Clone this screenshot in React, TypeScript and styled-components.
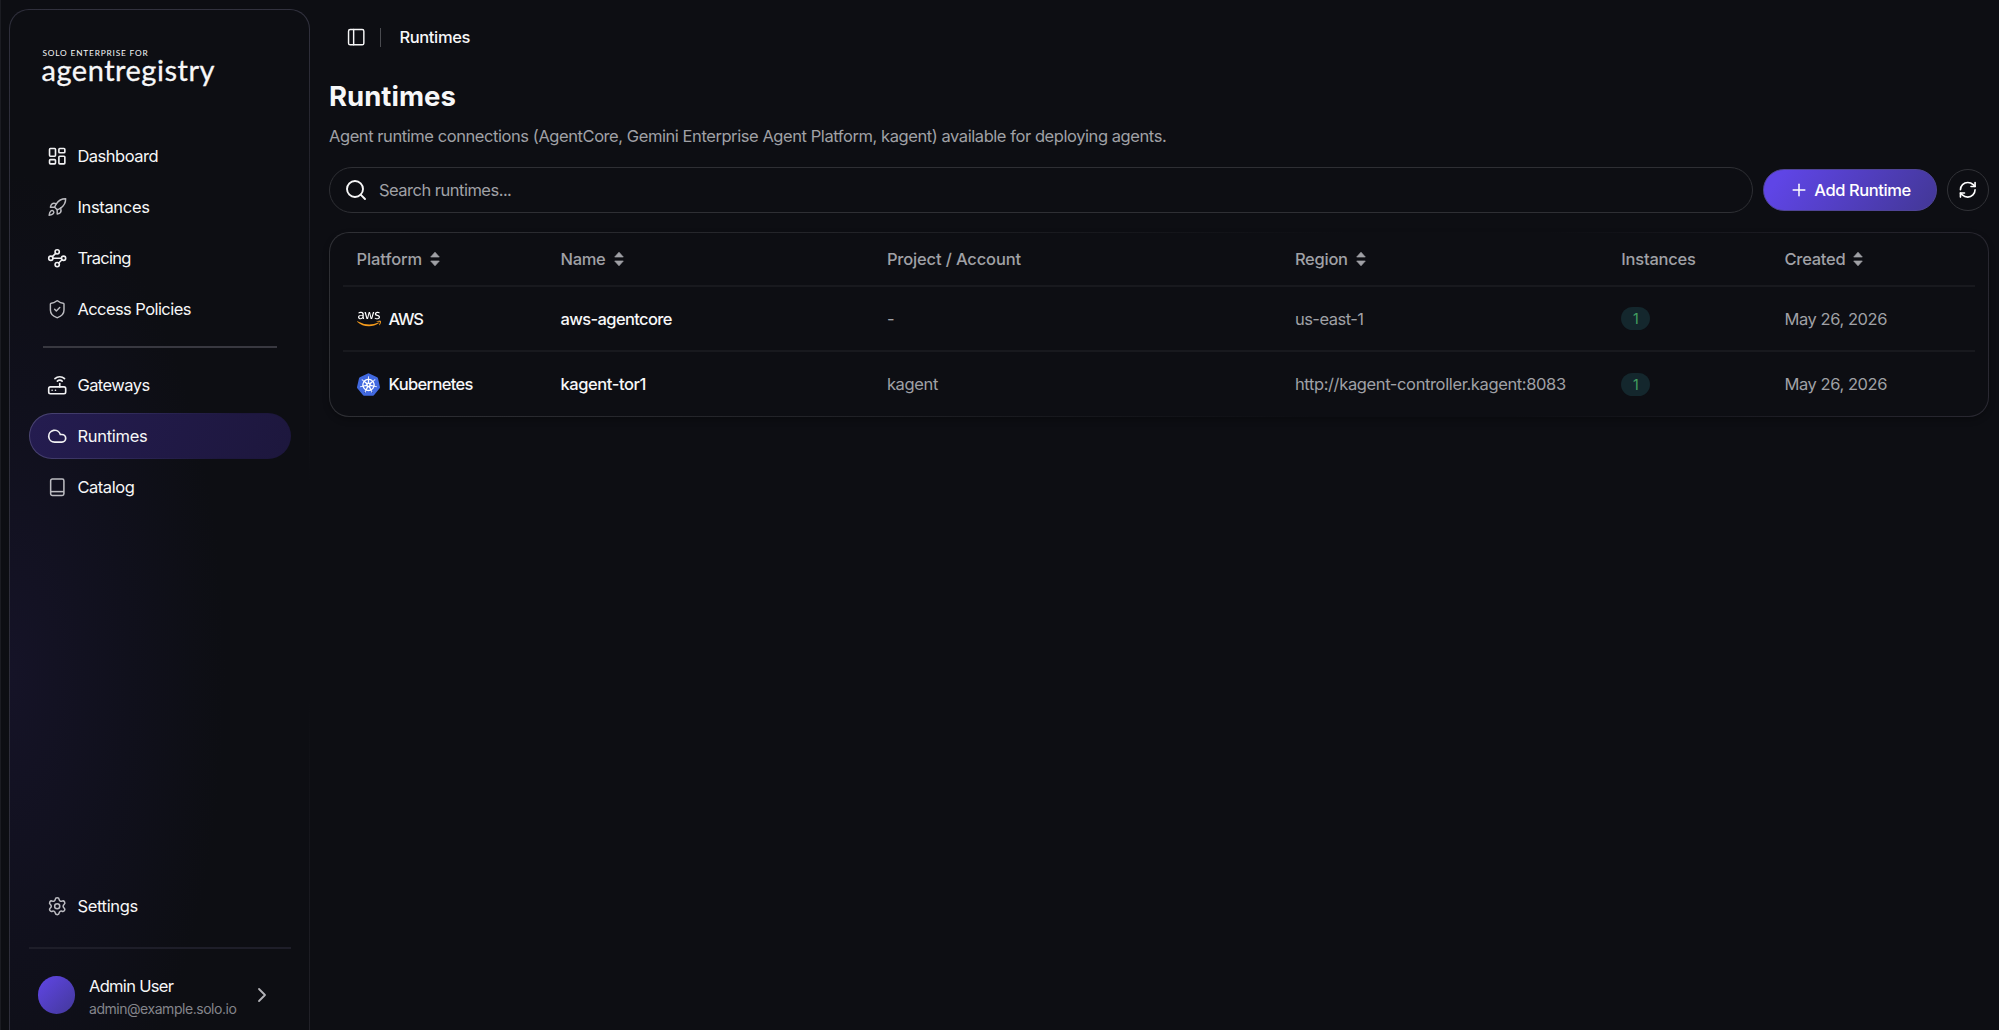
import React from "react";
import styled, { createGlobalStyle, css } from "styled-components";
import {
  ChevronRight,
  Cloud,
  LayoutDashboard,
  PanelLeft,
  Plus,
  RefreshCw,
  Rocket,
  Router,
  Search,
  Settings,
  ShieldCheck,
  Waypoints,
} from "lucide-react";
import { FaAws } from "react-icons/fa";
import { SiKubernetes } from "react-icons/si";

const color = {
  bg: "#0d0e13",
  text: "#f7f7f8",
  muted: "#a0a1a6",
  dim: "#84858b",
  line: "#2e2f34",
  rule: "#18191e",
};

const GlobalStyle = createGlobalStyle`
  *, *::before, *::after { box-sizing: border-box; }
  body {
    margin: 0;
    background: ${color.bg};
    color: ${color.text};
    font-family: Inter, "Liberation Sans", sans-serif;
    font-size: 16.5px;
    overflow: hidden;
  }
  svg { display: block; flex: none; }
`;

const Label = styled.span<{ $track?: number }>`
  letter-spacing: ${(p) => p.$track ?? -0.4}px;
  white-space: nowrap;
`;

const Shell = styled.div`
  display: flex;
  height: 100vh;
  box-shadow: inset 1px 0 0 #1b1c22;
`;

/* ---------- Sidebar ---------- */

const SidebarFrame = styled.aside`
  display: flex;
  flex-direction: column;
  flex: none;
  width: 301px;
  height: calc(100vh - 9px);
  margin: 9px 0 0 9px;
  padding: 0 18px 0 19px;
  border: 1px solid transparent;
  border-bottom: 0;
  border-radius: 20px 20px 0 0;
  background:
    radial-gradient(ellipse 215px 500px at 0 665px, #151327, #10101c 55%, ${color.bg}) padding-box,
    linear-gradient(90deg, #2e2e3b, rgba(46, 46, 59, 0) 60px) border-box,
    linear-gradient(180deg, #32323f, #25252e 12%, ${color.bg} 46%, ${color.bg} 68%, #212128) border-box;
`;

const Brand = styled.div`
  display: flex;
  flex-direction: column;
  height: 123px;
  padding: 38px 0 0 13.5px;
  font-family: Lato, "Liberation Sans", sans-serif;
`;

const BrandOver = styled.span`
  font-size: 8.3px;
  line-height: 10px;
  letter-spacing: 0.83px;
  white-space: nowrap;
`;

const BrandName = styled.span`
  font-size: 29px;
  line-height: 30px;
  letter-spacing: 0.52px;
  margin: -3px 0 0 -1px;
  -webkit-text-stroke: 0.3px currentColor;
`;

const NavList = styled.nav`
  display: flex;
  flex-direction: column;
  gap: 5px;
`;

const NavItem = styled.a<{ $active?: boolean; $soft?: boolean }>`
  display: flex;
  align-items: center;
  gap: 10.5px;
  height: 46px;
  padding-left: 16.5px;
  border: 1px solid transparent;
  border-radius: 23px;
  color: ${color.text};
  svg {
    color: ${(p) => (p.$soft ? "#bcbcc1" : "#f1f1f3")};
  }
  ${(p) =>
    p.$active &&
    css`
      background:
        linear-gradient(115deg, #241c50, #1d173d) padding-box,
        linear-gradient(115deg, #4d4776, #2b2554 45%, #1d173d 75%) border-box;
    `}
`;

const NavRule = styled.hr`
  width: 234px;
  height: 2px;
  margin: 14px 0 14px 14px;
  border: 0;
  background: #383840;
`;

const Spacer = styled.div`
  flex: 1;
`;

const UserBlock = styled.div`
  display: flex;
  align-items: center;
  height: 83px;
  margin-top: 18px;
  padding: 11px 17px 0 8.5px;
  border-top: 2px solid #1e1e29;
`;

const Avatar = styled.div`
  width: 37.5px;
  height: 37.5px;
  border-radius: 50%;
  background: linear-gradient(135deg, #6046e6, #43389a);
`;

const UserText = styled.div`
  display: flex;
  flex-direction: column;
  flex: 1;
  margin: 4px 0 0 14px;
`;

const UserName = styled(Label)`
  line-height: 23px;
`;

const UserMail = styled(Label)`
  font-size: 14px;
  line-height: 22px;
  color: ${color.dim};
`;

/* ---------- Main ---------- */

const Main = styled.main`
  display: flex;
  flex-direction: column;
  flex: 1;
  min-width: 0;
  padding: 0 10px 0 19px;
`;

const TopBar = styled.header`
  display: flex;
  align-items: center;
  height: 74px;
  padding-left: 16.5px;
  font-weight: 500;
`;

const TopRule = styled.span`
  width: 1px;
  height: 19px;
  margin: 0 18.5px 0 14px;
  background: #4a4b50;
`;

const Title = styled.h1`
  margin: 4px 0 0;
  font-size: 27.5px;
  line-height: 36px;
  font-weight: 700;
  letter-spacing: 0.02px;
`;

const Subtitle = styled.p`
  margin: 9.5px 0 0;
  line-height: 24px;
  letter-spacing: -0.43px;
  color: ${color.muted};
`;

const Toolbar = styled.div`
  display: flex;
  align-items: center;
  gap: 10px;
  margin-top: 19.5px;
`;

const SearchBox = styled.div`
  display: flex;
  align-items: center;
  flex: 1;
  gap: 11px;
  height: 46px;
  padding-left: 14px;
  border: 1px solid ${color.line};
  border-radius: 23px;
  color: ${color.muted};
  svg {
    color: ${color.text};
  }
`;

const AddButton = styled.button`
  display: flex;
  align-items: center;
  justify-content: center;
  gap: 5px;
  width: 174px;
  height: 42px;
  padding: 0;
  border: 1px solid #4f4496;
  border-radius: 21px;
  background: linear-gradient(125deg, #5f45e6 10%, #44389a 95%);
  color: #fff;
  font: inherit;
  font-weight: 500;
`;

const RoundButton = styled.button`
  display: grid;
  place-items: center;
  width: 42px;
  height: 42px;
  padding: 0;
  border: 1px solid #313237;
  border-radius: 50%;
  background: transparent;
  color: #fff;
`;

/* ---------- Table ---------- */

const TableCard = styled.section`
  height: 185px;
  margin-top: 19px;
  padding: 0 13px;
  border: 1px solid transparent;
  border-radius: 20px;
  background:
    linear-gradient(${color.bg}, ${color.bg}) padding-box,
    linear-gradient(100deg, #2f3035, #222328 30%, ${color.bg} 60%, ${color.bg} 72%, #2a2932) border-box;
  box-shadow: 0 3px 6px rgba(0, 0, 0, 0.25);
`;

const Row = styled.div<{ $head?: boolean }>`
  display: grid;
  grid-template-columns: 5fr 8fr 10fr 8fr 4fr 5fr;
  align-items: center;
  height: ${(p) => (p.$head ? 54 : 65)}px;
  border-bottom: 2px solid ${color.rule};
  color: ${color.muted};
  font-weight: ${(p) => (p.$head ? 500 : 400)};
  &:last-child {
    border-bottom: 0;
    height: 64px;
  }
`;

const Cell = styled.div<{ $strong?: boolean }>`
  display: flex;
  align-items: center;
  gap: ${(p) => (p.$strong ? 9 : 8)}px;
  padding-left: 13.5px;
  min-width: 0;
  ${(p) =>
    p.$strong &&
    css`
      color: ${color.text};
      font-weight: 500;
    `}
`;

const Count = styled.span`
  display: grid;
  place-items: center;
  width: 29px;
  height: 23px;
  border-radius: 12px;
  background: #14272d;
  color: #43a062;
  font-size: 14px;
`;

const KubeMark = styled.span`
  display: grid;
  place-items: center;
  width: 23px;
  height: 23px;
  background: radial-gradient(circle, #fff 0 8.6px, transparent 9px);
  color: #4169e0;
`;

const AwsMark = styled.span`
  display: grid;
  place-items: center;
  width: 23px;
  height: 23px;
`;

const SortIcon = () => (
  <svg width="10" height="16" viewBox="0 0 10 16" fill="currentColor">
    <path d="M5 1.2 9.3 6H.7z M5 14.8.7 10h8.6z" stroke="currentColor" strokeWidth=".7" strokeLinejoin="round" />
  </svg>
);

const CatalogIcon = () => (
  <svg width="20.4" height="20.4" viewBox="0 0 24 24" fill="none" stroke="currentColor" strokeWidth="1.8" strokeLinejoin="round">
    <rect x="4.3" y="2.3" width="15.6" height="19.4" rx="2" />
    <path d="M4.3 17.2h15.6" />
  </svg>
);

const AwsIcon = () => (
  <AwsMark>
    <FaAws size={24} fill="url(#awsFill)" />
  </AwsMark>
);

const AwsFill = () => (
  <svg width="0" height="0">
    <defs>
      <linearGradient id="awsFill" gradientUnits="userSpaceOnUse" x1="0" y1="0" x2="0" y2="512">
        <stop offset="0.622" stopColor="#ffffff" />
        <stop offset="0.622" stopColor="#f59b1c" />
      </linearGradient>
    </defs>
  </svg>
);

const ic = { size: 20.4 };

const primary = [
  { label: "Dashboard", track: -0.5, icon: <LayoutDashboard {...ic} strokeWidth={1.9} /> },
  { label: "Instances", track: -0.33, icon: <Rocket {...ic} strokeWidth={1.7} />, soft: true },
  { label: "Tracing", track: -0.75, icon: <Waypoints {...ic} strokeWidth={1.9} /> },
  { label: "Access Policies", track: -0.57, icon: <ShieldCheck {...ic} strokeWidth={1.7} />, soft: true },
];

const secondary = [
  { label: "Gateways", track: -0.56, icon: <Router {...ic} strokeWidth={1.9} /> },
  { label: "Runtimes", track: -0.27, icon: <Cloud {...ic} strokeWidth={2} />, active: true },
  { label: "Catalog", track: -0.44, icon: <CatalogIcon />, soft: true },
];

const columns = [
  { label: "Platform", track: -0.08, sort: true },
  { label: "Name", track: -0.3, sort: true },
  { label: "Project / Account", track: -0.15 },
  { label: "Region", track: -0.26, sort: true },
  { label: "Instances", track: -0.23 },
  { label: "Created", track: -0.26, sort: true },
];

const rows = [
  {
    icon: <AwsIcon />,
    platform: ["AWS", -1.2],
    name: ["aws-agentcore", -0.63],
    account: ["-", 0],
    region: ["us-east-1", -0.5],
  },
  {
    icon: (
      <KubeMark>
        <SiKubernetes size={23} />
      </KubeMark>
    ),
    platform: ["Kubernetes", -0.65],
    name: ["kagent-tor1", -0.42],
    account: ["kagent", -0.36],
    region: ["http://kagent-controller.kagent:8083", -0.371],
  },
] as const;

type NavEntry = { label: string; track: number; icon: React.ReactNode; soft?: boolean; active?: boolean };

const Nav = ({ entries }: { entries: NavEntry[] }) => (
  <NavList>
    {entries.map((e) => (
      <NavItem key={e.label} $active={e.active} $soft={e.soft}>
        {e.icon}
        <Label $track={e.track}>{e.label}</Label>
      </NavItem>
    ))}
  </NavList>
);

export default function App() {
  return (
    <>
      <GlobalStyle />
      <Shell>
        <SidebarFrame>
          <Brand>
            <BrandOver>SOLO ENTERPRISE FOR</BrandOver>
            <BrandName>agentregistry</BrandName>
          </Brand>
          <Nav entries={primary} />
          <NavRule />
          <Nav entries={secondary} />
          <Spacer />
          <Nav entries={[{ label: "Settings", track: -0.33, icon: <Settings {...ic} strokeWidth={1.8} />, soft: true }]} />
          <UserBlock>
            <Avatar />
            <UserText>
              <UserName $track={-0.7}>Admin User</UserName>
              <UserMail $track={-0.46}>admin@example.solo.io</UserMail>
            </UserText>
            <ChevronRight size={24} strokeWidth={1.8} color="#b4b4b9" />
          </UserBlock>
        </SidebarFrame>
        <Main>
          <TopBar>
            <PanelLeft size={20.4} strokeWidth={1.7} />
            <TopRule />
            <Label $track={-0.36}>Runtimes</Label>
          </TopBar>
          <Title>Runtimes</Title>
          <Subtitle>
            Agent runtime connections (AgentCore, Gemini Enterprise Agent Platform, kagent) available for deploying
            agents.
          </Subtitle>
          <Toolbar>
            <SearchBox>
              <Search size={24} strokeWidth={1.9} />
              <Label $track={-0.51}>Search runtimes...</Label>
            </SearchBox>
            <AddButton>
              <Plus size={20} strokeWidth={1.8} />
              <Label $track={-0.43}>Add Runtime</Label>
            </AddButton>
            <RoundButton>
              <RefreshCw size={19.5} strokeWidth={2} />
            </RoundButton>
          </Toolbar>
          <TableCard>
            <Row $head>
              {columns.map((c) => (
                <Cell key={c.label}>
                  <Label $track={c.track}>{c.label}</Label>
                  {c.sort && <SortIcon />}
                </Cell>
              ))}
            </Row>
            {rows.map((r) => (
              <Row key={r.name[0]}>
                <Cell $strong>
                  {r.icon}
                  <Label $track={r.platform[1]}>{r.platform[0]}</Label>
                </Cell>
                <Cell $strong>
                  <Label $track={r.name[1]}>{r.name[0]}</Label>
                </Cell>
                <Cell>
                  <Label $track={r.account[1]}>{r.account[0]}</Label>
                </Cell>
                <Cell>
                  <Label $track={r.region[1]}>{r.region[0]}</Label>
                </Cell>
                <Cell>
                  <Count>1</Count>
                </Cell>
                <Cell>
                  <Label $track={-0.44}>May 26, 2026</Label>
                </Cell>
              </Row>
            ))}
          </TableCard>
        </Main>
      </Shell>
      <AwsFill />
    </>
  );
}
